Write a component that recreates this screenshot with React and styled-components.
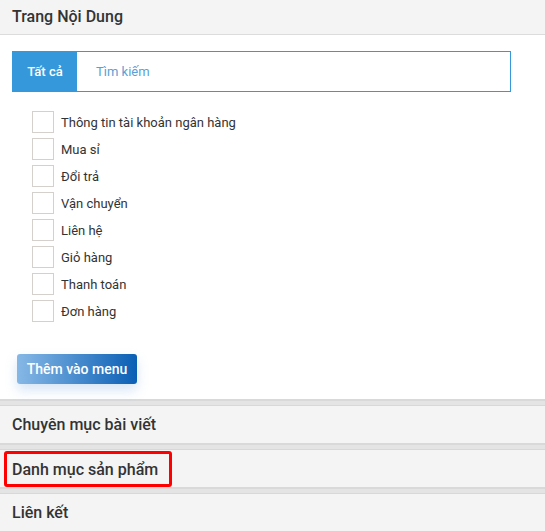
import React from 'react'
import styled, { createGlobalStyle } from 'styled-components'

const pages = [
  'Thông tin tài khoản ngân hàng',
  'Mua sỉ',
  'Đổi trả',
  'Vận chuyển',
  'Liên hệ',
  'Giỏ hàng',
  'Thanh toán',
  'Đơn hàng'
]

const sections = [
  { title: 'Chuyên mục bài viết' },
  { title: 'Danh mục sản phẩm', marked: true },
  { title: 'Liên kết' }
]

export default function App () {
  return (
    <>
      <GlobalStyle />
      <Panel>
        <PanelHeader>Trang Nội Dung</PanelHeader>
        <PanelBody>
          <Tabs>
            <Tab active>Tất cả</Tab>
            <Tab>Tìm kiếm</Tab>
          </Tabs>
          <CheckList>
            {pages.map(p => (
              <CheckRow key={p}>
                <Box />
                <span>{p}</span>
              </CheckRow>
            ))}
          </CheckList>
          <AddButton>Thêm vào menu</AddButton>
        </PanelBody>
      </Panel>
      {sections.map(s => (
        <Section key={s.title}>
          <SectionTitle marked={s.marked}>{s.title}</SectionTitle>
        </Section>
      ))}
    </>
  )
}

/*
Styles
 */

const GlobalStyle = createGlobalStyle`
  body {
    margin: 0;
    background: #fff;
    font-family: Roboto, "Noto Sans", sans-serif;
    color: #333;
  }
`

const Panel = styled.div`
  background: #fff;
`

const PanelHeader = styled.div`
  height: 34px;
  line-height: 33px;
  padding-left: 12px;
  background: #f4f4f4;
  border-bottom: 1px solid #dcdcdc;
  font-size: 16px;
  font-weight: 500;
  color: #333;
`

const PanelBody = styled.div`
  padding: 16px 34px 15px 12px;
`

const Tabs = styled.div`
  display: flex;
  height: 39px;
  border: 1px solid #3498db;
`

const Tab = styled.div`
  display: flex;
  align-items: center;
  justify-content: ${p => (p.active ? 'center' : 'flex-start')};
  box-sizing: border-box;
  flex: none;
  width: ${p => (p.active ? '64px' : 'auto')};
  padding-left: ${p => (p.active ? '0' : '19px')};
  background: ${p => (p.active ? '#3498db' : '#fff')};
  color: ${p => (p.active ? '#fff' : '#5a9fd6')};
  font-size: 13px;
  font-weight: ${p => (p.active ? 500 : 400)};
  white-space: nowrap;
`

const CheckList = styled.div`
  display: flex;
  flex-direction: column;
  gap: 5px;
  padding: 19px 0 0 20px;
`

const CheckRow = styled.label`
  display: flex;
  align-items: center;
  gap: 7px;
  font-size: 13px;
  color: #333;
`

const Box = styled.span`
  flex: none;
  box-sizing: border-box;
  width: 22px;
  height: 22px;
  border: 1px solid #d4d0cc;
  background: #fff;
`

const AddButton = styled.button`
  margin: 32px 0 0 5px;
  width: 120px;
  height: 30px;
  border: none;
  border-radius: 3px;
  background: linear-gradient(to right, #86b8e6, #0a5fb5);
  box-shadow: 0 6px 12px rgba(120, 170, 225, 0.3);
  color: #fff;
  font-family: Roboto, sans-serif;
  font-size: 14px;
  font-weight: 500;
  cursor: pointer;
`

const Section = styled.div`
  border-top: 2px solid #d9d9da;
  box-shadow: inset 0 4px 0 #e4e4e5, inset 0 5px 0 #d8d8d8;
  padding-top: 5px;
  background: #f4f4f4;
  height: 37px;
`

const SectionTitle = styled.div`
  display: inline-flex;
  align-items: center;
  box-sizing: border-box;
  height: ${p => (p.marked ? '36px' : '37px')};
  margin: ${p => (p.marked ? '1px 0 0 4px' : '0')};
  padding-left: ${p => (p.marked ? '5px' : '12px')};
  padding-right: ${p => (p.marked ? '11px' : '0')};
  border: ${p => (p.marked ? '3px solid #f00' : 'none')};
  border-radius: 3px;
  font-size: 16px;
  font-weight: 500;
  color: #333;
`
